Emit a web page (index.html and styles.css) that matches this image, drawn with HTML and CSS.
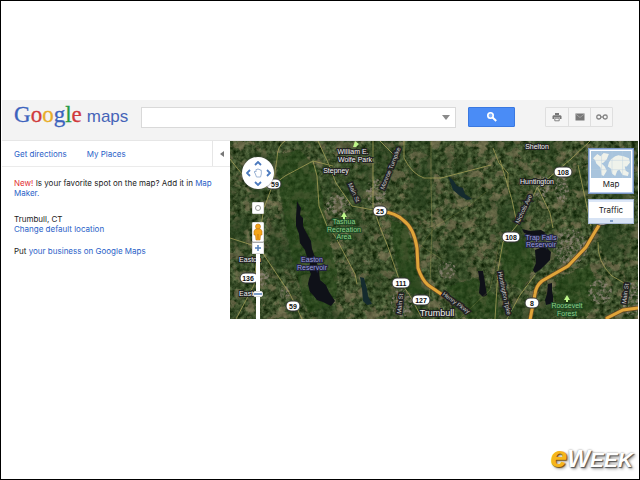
FILE: index.html
```html
<!DOCTYPE html>
<html lang="en">
<head>
<meta charset="utf-8">
<title>Google Maps</title>
<link rel="stylesheet" href="styles.css">
</head>
<body>
<div class="page">
  <header class="topbar">
    <a class="logo" href="#" aria-label="Google maps"><span class="google"><span class="blue">G</span><span class="red">o</span><span class="yellow">o</span><span class="blue">g</span><span class="green">l</span><span class="red">e</span></span><span class="product">maps</span></a>
    <form class="search">
      <div class="search-box">
        <input type="text" aria-label="Search Google Maps">
        <button class="drop" type="button" aria-label="Search options"><svg width="8" height="5" viewBox="0 0 8 5"><path d="M0 0h8L4 5z" fill="#8a8a8a"/></svg></button>
      </div>
      <button class="go" type="submit" aria-label="Search"><svg width="12" height="12" viewBox="0 0 12 12"><circle cx="4.5" cy="4.5" r="2.7" fill="#7fb0fb" stroke="#fff" stroke-width="1.6"/><path d="M6.6 6.6l3.6 3.4" stroke="#fff" stroke-width="2"/></svg></button>
    </form>
    <div class="tools">
      <button type="button" aria-label="Print"><svg width="10" height="10" viewBox="0 0 10 10"><path d="M3 1h4v2H3zM1.5 3.2h7L9.5 4v3H8V5.600H2V7H.5V4z" fill="#777"/><path d="M2.800 6.200h4.400v2.600H2.800z" fill="#f5f5f5" stroke="#777" stroke-width=".9"/></svg></button>
      <button type="button" aria-label="Email"><svg width="10" height="8" viewBox="0 0 10 8"><path d="M.5.5h9v7h-9z" fill="#777"/><path d="M.8 1.200L5 4.500l4.200-3.300" fill="none" stroke="#aaa" stroke-width=".8"/></svg></button>
      <button type="button" aria-label="Link"><svg width="12" height="6" viewBox="0 0 12 6"><g fill="none" stroke="#858585" stroke-width="1.300"><rect x=".8" y="1" width="4" height="4" rx="1.800"/><rect x="7.200" y="1" width="4" height="4" rx="1.800"/><path d="M4.500 3h3"/></g></svg></button>
    </div>
  </header>

  <main class="content">
    <aside class="panel">
      <div class="tabs">
        <nav><a href="#">Get directions</a><a href="#">My Places</a></nav>
        <button class="collapse" type="button" aria-label="Hide panel"><svg width="4" height="6" viewBox="0 0 4 6"><path d="M4 0v6L0 3z" fill="#777"/></svg></button>
      </div>
      <div class="notes">
        <p class="news"><strong>New!</strong> Is your favorite spot on the map? Add it in <a href="#">Map Maker.</a></p>
        <p>Trumbull, CT<br><a href="#">Change default location</a></p>
        <p>Put <a href="#">your business on Google Maps</a></p>
      </div>
    </aside>

    <section class="map" aria-label="Satellite map">
      <svg class="imagery" viewBox="230 141 408 178" preserveAspectRatio="xMinYMin slice">
        <defs>
          <filter id="canopy" x="0" y="0" width="100%" height="100%" color-interpolation-filters="sRGB">
            <feTurbulence type="fractalNoise" baseFrequency=".22" numOctaves="3" seed="4"/>
            <feColorMatrix values=".5 .15 0 0 -.1  .5 .12 0 0 -.01  .42 .1 0 0 -.1  0 0 0 0 1"/>
          </filter>
          <filter id="clearings" x="0" y="0" width="100%" height="100%" color-interpolation-filters="sRGB">
            <feTurbulence type="fractalNoise" baseFrequency=".09 .1" numOctaves="5" seed="12"/>
            <feColorMatrix values="0 .3 0 0 .36  0 .25 0 0 .34  0 .2 0 0 .25  7 0 0 0 -3.700"/>
          </filter>
          <filter id="woods" x="0" y="0" width="100%" height="100%" color-interpolation-filters="sRGB">
            <feTurbulence type="fractalNoise" baseFrequency=".03 .02" numOctaves="3" seed="7"/>
            <feColorMatrix values="0 0 0 0 .13  0 0 0 0 .24  0 0 0 0 .1  0 5 0 0 -2.400"/>
          </filter>
          <filter id="rough" x="-10%" y="-10%" width="120%" height="120%">
            <feTurbulence type="fractalNoise" baseFrequency=".18" numOctaves="2" seed="2"/>
            <feDisplacementMap in="SourceGraphic" scale="5"/>
          </filter>
          <filter id="town" x="-20%" y="-20%" width="140%" height="140%" color-interpolation-filters="sRGB">
            <feTurbulence type="fractalNoise" baseFrequency=".3" numOctaves="2" seed="9"/>
            <feColorMatrix values="0 0 0 0 .56  0 0 0 0 .52  0 0 0 0 .47  4 0 0 0 -1.750"/>
            <feComposite in2="SourceGraphic" operator="in"/>
          </filter>
        </defs>
        <rect x="230" y="141" width="408" height="178" filter="url(#canopy)"/>
        <rect x="230" y="141" width="408" height="178" filter="url(#clearings)" opacity=".6"/>
        <rect x="230" y="141" width="408" height="178" filter="url(#woods)" opacity=".5"/>

        <g filter="url(#rough)" fill="#234519" opacity=".55">
          <path d="M275 155l25-5 18 20 10 60 10 50-5 25-25 8-15-50-8-40z"/>
          <path d="M390 220l18 6 6 30 10 38-16-2-12-30z"/>
          <path d="M446 286l30-8 22 20 0 20h-40z"/>
          <path d="M500 240l28 0 6 30-12 20-20-12z"/>
          <path d="M556 280l34-16 10 30-12 22h-34z"/>
        </g>
        <g filter="url(#town)" opacity=".8">
          <ellipse cx="570" cy="247" rx="17" ry="18"/>
          <ellipse cx="562" cy="189" rx="7" ry="14"/>
          <ellipse cx="376" cy="192" rx="10" ry="13"/>
          <ellipse cx="447" cy="270" rx="9" ry="9"/>
          <ellipse cx="338" cy="205" rx="12" ry="10"/>
          <ellipse cx="264" cy="278" rx="5" ry="9"/>
          <ellipse cx="631" cy="299" rx="10" ry="16"/>
          <ellipse cx="600" cy="292" rx="12" ry="12"/>
          <ellipse cx="542" cy="187" rx="9" ry="11"/>
          <ellipse cx="285" cy="293" rx="5" ry="7"/>
          <ellipse cx="402" cy="303" rx="11" ry="14"/>
        </g>

        <g fill="#0f1118">
          <path d="M297 201l2 4 2 3-1 7 3 3 0 8 3 6 5 9 1 8 3 8 4 13 1 10 6 5 3 7 6 9-4 5-4-2-4-2-6-2-4-5-3-3-2-8 1-5 2-5-2-4 1-7-3-6-2-7-5-7-1-9-3-8 0-8z"/>
          <path d="M522 229l8 2 11-1 5 3-6 3-8 0-8-3zM535 250l5-2 7 0 4 4-1 8-5 5-4 4-6 4-2-3 3-7z"/>
          <path d="M548 284l4-1 0 8 1 5 0 7-7 2-1-5 2-6z"/>
          <path d="M478 271h5l2 12 2 12-4 2-4-4 1-10z"/>
        </g>
        <g fill="#152b2e">
          <path d="M360 277l4 1 3 11 1 7 4 8-5 1-4-4-1-12z"/>
          <path d="M448 176l5 4 4 6 6 2 2 6 7 5-5 1-7-4-7-6z"/>
        </g>

        <g fill="none" stroke="#aaa45b" stroke-width="1" opacity=".75">
          <path d="M285 141q-8 5-8 18l-4 25-9 24-6 35-4 42-18 34"/>
          <path d="M230 159q15 20 25 27t30-10l28-15 20 5"/>
          <path d="M318 141q10 20 18 42l16 23 27 5"/>
          <path d="M313 161l4 15 2 30 8 20 8 10 20 38 2 10"/>
          <path d="M404 141v17q8 16 20 20h17l50-13"/>
          <path d="M431 141v40l1 48-3 80" opacity=".5"/>
          <path d="M373 141l0 66 7 20 8 20 12 35 9 12 13 24"/>
          <path d="M262 252l28 42 12 25M230 238l25 8"/>
          <path d="M493 148l6 15 9 10v14M590 141l-19 18-34 29-14 30-20 24-5 28-3 49"/>
          <path d="M500 160l12 40 5 24M538 188l12 25 3 15M578 165l6 28 7 33M598 242q-1 20 14 34l14 8"/>
          <path d="M535 275l-15 20-13 24M380 141l15 15"/>
          <path d="M443 260l-22-14 15-20 30-18 20-16M460 318l30-28 10-50" opacity=".3"/>
        </g>
        <g fill="none" stroke-linecap="round">
          <g stroke="#694b24" stroke-width="4.500">
            <path d="M380 211q16 2 23 9 11 8 14 28l1 20q4 12 10 17l16 11"/>
            <path d="M604 211q-4 14-8 19l-10 17-18 19-26 15q-6 5-7 13l-5 26"/>
            <path d="M607 318l16-8 15-2"/>
          </g>
          <g stroke="#e0a53a" stroke-width="3">
            <path d="M380 211q16 2 23 9 11 8 14 28l1 20q4 12 10 17l16 11"/>
            <path d="M604 211q-4 14-8 19l-10 17-18 19-26 15q-6 5-7 13l-5 26"/>
            <path d="M607 318l16-8 15-2"/>
          </g>
        </g>

        <g class="road-names">
          <text transform="translate(384 190) rotate(-68)">Monroe Turnpike</text>
          <text transform="translate(348 184) rotate(66)">Main St</text>
          <text transform="translate(401 314) rotate(-84)">Main St</text>
          <text transform="translate(442 295) rotate(36)">Henry Pkwy</text>
          <text transform="translate(519 224) rotate(-65)">Nichols Ave</text>
          <text transform="translate(498 272) rotate(78)">Huntington Tpke</text>
          <text transform="translate(626 304) rotate(-82)">Main St</text>
        </g>
        <g class="places">
          <text x="353" y="154">William E.</text><text x="355" y="162">Wolfe Park</text>
          <text x="336" y="173">Stepney</text>
          <text x="537" y="149">Shelton</text>
          <text x="537" y="184">Huntington</text>
          <text x="250" y="262">Easton</text>
          <text x="250" y="296">Easton</text>
          <text class="large" x="437" y="316">Trumbull</text>
        </g>
        <g class="parks">
          <text x="344" y="224">Tashua</text><text x="344" y="232">Recreation</text><text x="344" y="239">Area</text>
          <text x="567" y="308">Roosevelt</text><text x="567" y="316">Forest</text>
        </g>
        <g class="waters">
          <text x="312" y="262">Easton</text><text x="312" y="270">Reservoir</text>
          <text x="541" y="240">Trap Falls</text><text x="541" y="247">Reservoir</text>
        </g>
        <g fill="#bdf589"><path d="M344 212l3 5h-2v2h-2v-2h-2zM567 295l3 5h-2v2h-2v-2h-2zM355 141l4 3-3 3h-3z"/></g>

        <g class="shields">
          <rect x="266" y="179" width="15" height="10" rx="5"/><text x="275" y="187">59</text>
          <rect x="373" y="206" width="14" height="10" rx="5"/><text x="380" y="214">25</text>
          <rect x="240" y="273" width="18" height="10" rx="5"/><text x="248" y="281">136</text>
          <rect x="286" y="301" width="14" height="10" rx="5"/><text x="293" y="309">59</text>
          <rect x="392" y="278" width="18" height="10" rx="5"/><text x="401" y="286">111</text>
          <rect x="412" y="295" width="18" height="10" rx="5"/><text x="421" y="303">127</text>
          <rect x="554" y="167" width="18" height="10" rx="5"/><text x="563" y="175">108</text>
          <rect x="502" y="232" width="18" height="10" rx="5"/><text x="511" y="240">108</text>
          <rect x="525" y="298" width="14" height="10" rx="5"/><text x="532" y="306">8</text>
          <rect x="595" y="215" width="14" height="10" rx="5"/>
        </g>
      </svg>

      <div class="navigator">
        <div class="compass">
          <button class="north" type="button" aria-label="Pan up"><svg width="8" height="5" viewBox="0 0 8 5"><path d="M1 4l3-3 3 3"/></svg></button>
          <button class="west" type="button" aria-label="Pan left"><svg width="5" height="8" viewBox="0 0 5 8"><path d="M4 1L1 4l3 3"/></svg></button>
          <button class="hand" type="button" aria-label="Return to last result"><svg width="10" height="10" viewBox="0 0 10 10"><path class="palm" d="M2 5L1 4l1-.8 1 .8V1.500h1.300V1h1.400v.5H7v.7h1.300V6L7.500 9h-4z"/></svg></button>
          <button class="east" type="button" aria-label="Pan right"><svg width="5" height="8" viewBox="0 0 5 8"><path d="M1 1l3 3-3 3"/></svg></button>
          <button class="south" type="button" aria-label="Pan down"><svg width="8" height="5" viewBox="0 0 8 5"><path d="M1 1l3 3 3-3"/></svg></button>
        </div>
        <button class="locate" type="button" aria-label="Show my location"><svg width="8" height="8" viewBox="0 0 8 8"><circle cx="4" cy="4" r="2.500" fill="#fff" stroke="#999"/></svg></button>
        <button class="pegman" type="button" aria-label="Street View"><svg width="10" height="18" viewBox="0 0 10 18"><circle cx="5" cy="3.500" r="2.500" fill="#f4a51c" stroke="#bd7510" stroke-width=".6"/><path d="M2.500 6h5L9 8v4H7.500L7 17H3l-.5-5H1V8z" fill="#f6a71a" stroke="#bd7510" stroke-width=".6"/><path d="M5 11v5" stroke="#b96b0b" stroke-width=".7"/></svg></button>
        <button class="plus" type="button" aria-label="Zoom in"><svg width="8" height="8" viewBox="0 0 8 8"><path d="M4 1v6M1 4h6" stroke="#5580b9" stroke-width="1.500"/></svg></button>
        <div class="track"><button class="handle" type="button" aria-label="Zoom level"></button></div>
      </div>

      <div class="layers">
        <button class="maptype" type="button">
          <svg viewBox="0 0 38 26" preserveAspectRatio="none"><path fill="#a8c4dd" d="M0 0h38v26H0z"/><path d="M2 7l4-4 3 2 3-3 5 1-2 5-3 3-2 1 3 3 2 4-3 5-2-1-1-7-4-4-1-3zM19 8l4-3 3-1 5 1 5 2 1 4-3 4-2 0 1 4 3 2-1 3-5-1-3-5-2 1-2 5-3-2-1-5-3-2 1-4z" fill="#eff2eb"/><path d="M0 9h38M0 18h38M10 0v26M20 0v26M30 0v26" stroke="#b9cfdf" stroke-width=".4"/></svg>
          <span>Map</span>
        </button>
        <button class="traffic" type="button"><span>Traffic</span><i></i></button>
      </div>
    </section>
  </main>

  <footer class="credit" aria-label="eWEEK"><span class="e">e</span><span class="w">W</span><span class="eek">EEK</span></footer>
</div>
</body>
</html>
```
FILE: styles.css
```css
* { box-sizing: border-box; }

body {
  margin: 0;
  background: #fff;
  color: #222;
  font: 8px/10px Inter, "Liberation Sans", Arial, sans-serif;
}

a { color: #2a62c8; text-decoration: none; }

button {
  display: flex;
  align-items: center;
  justify-content: center;
  margin: 0;
  padding: 0;
  border: 0;
  background: none;
  color: inherit;
  font: inherit;
}

svg { display: block; }

.page {
  display: flex;
  flex-direction: column;
  min-height: 100vh;
  padding: 99px 1px 5px;
  border: 1px solid #000;
}

/* Top bar */
.topbar {
  display: flex;
  align-items: center;
  height: 41px;
  padding: 0 25px 6px 12px;
  background: #f3f3f3;
  border-bottom: 1px solid #e6e6e6;
}

.logo {
  display: flex;
  align-items: baseline;
  gap: 5px;
  width: 127px;
  padding-bottom: 2px;
  line-height: 28px;
}

.google { font-family: "Liberation Serif", serif; font-size: 23px; -webkit-text-stroke: 0.3px; }
.product { color: #4664b8; font-family: "Liberation Sans", Arial, sans-serif; font-size: 17px; }
.blue { color: #3b62bd; }
.red { color: #d03a3c; }
.yellow { color: #e8ac28; }
.green { color: #279a45; }

.search { display: flex; flex: 1; gap: 12px; }

.search-box {
  display: flex;
  flex: 1;
  height: 21px;
  background: #fff;
  border: 1px solid #d9d9d9;
}

.search-box input {
  flex: 1;
  min-width: 0;
  border: 0;
  padding: 0 4px;
  background: none;
  font: inherit;
}

.drop { width: 19px; }

.go {
  width: 47px;
  height: 20px;
  background: #4a8cf6;
  border: 1px solid #3a78e0;
  border-radius: 1px;
}

.tools {
  display: flex;
  margin-left: 30px;
  border: 1px solid #dfdfdf;
  border-radius: 1px;
  background: #f5f5f5;
}

.tools button { width: 22px; height: 18px; }
.tools button + button { border-left: 1px solid #dfdfdf; }

/* Side panel */
.content {
  display: grid;
  grid-template-columns: 228px 1fr;
}

.tabs {
  display: flex;
  height: 26px;
  border-bottom: 1px solid #ebebeb;
}

.tabs nav {
  display: flex;
  flex: 1;
  align-items: center;
  gap: 20px;
  padding-left: 12px;
}

.collapse {
  width: 18px;
  border-left: 1px solid #e6e6e6;
}

.notes { padding: 11px 16px 0 12px; }
.notes p { margin: 0 0 12px; }
.notes .news { margin-bottom: 16px; }
.notes strong { color: #e22f32; font-weight: normal; }

/* Map */
.map {
  position: relative;
  height: 178px;
  overflow: hidden;
  background: #2c4323;
}

.imagery { width: 100%; height: 100%; }

.imagery text {
  font-family: "Liberation Sans", Arial, sans-serif;
  font-size: 7px;
  text-anchor: middle;
  paint-order: stroke;
  stroke: #222;
  stroke-width: 2px;
  fill: #f2f2f2;
}

.imagery .road-names text { text-anchor: start; font-size: 6px; fill: #ccc; stroke-width: 3px; }
.imagery .places .large { font-size: 9px; }
.imagery .parks text { fill: #8fcf8a; stroke: #1f4a24; }
.imagery .waters text { fill: #9a9edb; stroke: #222341; }
.shields rect { fill: #fff; stroke: #333; stroke-width: 1px; }
.imagery .shields text { fill: #111; stroke: none; font-weight: bold; }

.navigator {
  position: absolute;
  top: 16px;
  left: 12px;
  bottom: 0;
  width: 32px;
  display: flex;
  flex-direction: column;
  align-items: center;
}

.compass {
  display: grid;
  grid-template: "a n b" 8px "w h e" 12px "c s d" 8px / 8px 12px 8px;
  justify-content: center;
  align-content: center;
  width: 32px;
  height: 32px;
  margin-bottom: 13px;
  border-radius: 50%;
  background: #fff;
  box-shadow: 0 0 2px #555;
}

.north { grid-area: n; }
.west { grid-area: w; }
.hand { grid-area: h; }
.east { grid-area: e; }
.south { grid-area: s; }
.compass path { fill: none; stroke: #4b79bd; stroke-width: 1.8px; }
.compass .palm { fill: #fff; stroke: #9eb5d5; stroke-width: 1px; }

.locate, .pegman, .plus {
  width: 12px;
  background: #fff;
  border: 1px solid #ddd;
  border-radius: 1px;
}

.locate { height: 12px; margin-bottom: 8px; }
.pegman { height: 20px; }
.plus { height: 12px; border-top-color: #aaa; }

.track {
  display: flex;
  flex: 1;
  justify-content: center;
  width: 4px;
  padding-top: 37px;
  background: #fff;
}

.handle {
  flex: none;
  width: 10px;
  height: 6px;
  background: linear-gradient(#fff 1px, #7d9cc6 1px 3px, #fff 3px);
  border: 1px solid #ddd;
  border-radius: 2px;
}

.layers {
  position: absolute;
  top: 7px;
  right: 4px;
  width: 46px;
  display: flex;
  flex-direction: column;
  gap: 5px;
}

.maptype {
  flex-direction: column;
  padding: 2px;
  background: #fff;
  border: 1px solid #7894c5;
  box-shadow: inset 0 0 0 1px #b6cae9;
}

.maptype svg { width: 100%; height: 27px; }
.maptype span { line-height: 13px; }

.traffic {
  flex-direction: column;
  justify-content: space-between;
  height: 25px;
  padding-top: 2px;
  background: #fff;
  border: 1px solid #aabbd7;
  box-shadow: inset 0 2px 0 #dce7f7;
}

.traffic span { line-height: 16px; }

.traffic i {
  align-self: stretch;
  height: 5px;
  background: linear-gradient(#7e9dc9, #7e9dc9) center / 3px 2px no-repeat #d7e3f4;
}

/* Publisher mark */
.credit {
  display: flex;
  align-items: baseline;
  justify-content: flex-end;
  margin-top: auto;
  padding-right: 5px;
  color: #fff;
  font-family: "Liberation Sans Narrow", "Liberation Sans", sans-serif;
  font-weight: bold;
  font-style: italic;
  font-size: 24px;
  line-height: 28px;
  text-shadow: 1px 1px 1px #555, 0 0 2px #888, 2px 2px 3px #999;
}

.credit .e { color: #f6b51c; font-size: 30px; text-shadow: 1px 1px 1px #704d10, 2px 2px 3px #aaa; }
.credit .eek { font-size: 21px; }
```
